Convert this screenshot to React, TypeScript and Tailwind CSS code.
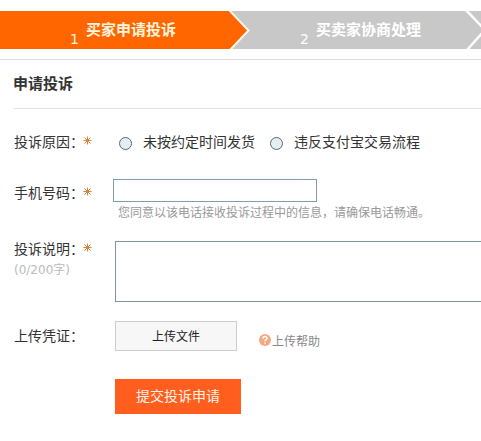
import { useState } from "react";

const reasons = ["未按约定时间发货", "违反支付宝交易流程"];

function Label({ text, required }: { text: string; required?: boolean }) {
  return (
    <div className="flex h-5 items-center text-[14px] leading-5 whitespace-nowrap text-[#333]">
      <span className="w-14">{text}</span>
      <span className="w-3.5">：</span>
      {required && <Star />}
    </div>
  );
}

function Star() {
  return (
    <svg className="-mt-1 -ml-px h-[9px] w-[9px]" viewBox="0 0 9 9" stroke="#dc8238" strokeWidth="1">
      <path d="M4.5 0.5v8M0.5 4.5h8M1.5 1.5l6 6M7.5 1.5l-6 6" />
    </svg>
  );
}

function Steps() {
  return (
    <div className="relative mt-[11px] h-[38px] overflow-hidden bg-[#c8c8c8]">
      {/* Arrow shapes */}
      <svg className="absolute inset-0" width="481" height="38" viewBox="0 0 481 38">
        <path d="M0 0H230L248 19L230 38H0Z" fill="#ff6600" />
        <path d="M229 -1L248.500 19.500L230 39" fill="none" stroke="#fff6e6" strokeWidth="2" />
        <path d="M466 -1L485 19L467 39" fill="none" stroke="#fff" strokeWidth="2.500" />
      </svg>
      <div className="relative flex h-full font-bold text-[15px] leading-[38px] whitespace-nowrap">
        <div className="flex w-[230px] pl-[70px] text-[#fff4dc]">
          <span className="w-4 pt-[9px] font-['DejaVu_Sans'] text-[14px] font-normal">1</span>
          <span>买家申请投诉</span>
        </div>
        <div className="flex pl-[70px] text-white">
          <span className="w-4 pt-[9px] font-['DejaVu_Sans'] text-[14px] font-normal">2</span>
          <span>买卖家协商处理</span>
        </div>
      </div>
    </div>
  );
}

export default function App() {
  const [reason, setReason] = useState("");
  const [phone, setPhone] = useState("");
  const [detail, setDetail] = useState("");

  return (
    <div
      lang="zh-CN"
      className="h-[441px] w-[481px] overflow-hidden bg-white font-['Liberation_Sans','Noto_Sans_CJK_SC',sans-serif]"
    >
      <Steps />

      <div className="mt-2.5 border-t border-[#dedede] pl-3.5">
        <h1 className="h-[49px] border-b border-[#e2e2e2] text-[15px] leading-[48px] font-bold text-[#333]">
          <span className="-ml-px">申请投诉</span>
        </h1>

        {/* Reason */}
        <div className="mt-[23px] flex h-5 items-center">
          <div className="w-[105px] shrink-0">
            <Label text="投诉原因" required />
          </div>
          {reasons.map((r) => (
            <label key={r} className="mr-[15px] flex items-center text-[14px] leading-5 whitespace-nowrap text-[#333]">
              <input
                type="radio"
                name="reason"
                checked={reason === r}
                onChange={() => setReason(r)}
                className="mt-[3px] mr-[11px] h-[13px] w-[13px] appearance-none rounded-full border border-[#526b7a] bg-[#e6eef2] checked:bg-[#526b7a]"
              />
              {r}
            </label>
          ))}
        </div>

        {/* Phone */}
        <div className="mt-[27px] flex h-[62px]">
          <div className="w-[99px] shrink-0 pt-1">
            <Label text="手机号码" required />
          </div>
          <div>
            <input
              value={phone}
              onChange={(e) => setPhone(e.target.value)}
              className="block h-[23px] w-[204px] border border-[#7f9db0] bg-white px-1 text-[14px] outline-none"
            />
            <p className="mt-[3px] pl-[5px] text-[12px] leading-4 whitespace-nowrap text-[#999]">
              您同意以该电话接收投诉过程中的信息，请确保电话畅通。
            </p>
          </div>
        </div>

        {/* Detail */}
        <div className="flex h-20">
          <div className="w-[101px] shrink-0">
            <div className="-mt-0.5">
              <Label text="投诉说明" required />
            </div>
            <p className="mt-[3px] font-['DejaVu_Sans','Noto_Sans_CJK_SC',sans-serif] text-[12px] leading-4 text-[#bbb]">(0/200字)</p>
          </div>
          <textarea
            value={detail}
            onChange={(e) => setDetail(e.target.value)}
            className="block h-[61px] w-[400px] shrink-0 resize-none border border-[#8195a0] bg-white p-1 text-[14px] outline-none"
          />
        </div>

        {/* Evidence */}
        <div className="flex h-[58px]">
          <div className="w-[101px] shrink-0 pt-[5px]">
            <Label text="上传凭证" />
          </div>
          <button className="h-[30px] w-[122px] border border-[#ccc] bg-[#f7f7f7] pt-px text-[12px] text-[#222]">上传文件</button>
          <a className="ml-[22px] flex h-[42px] items-center text-[12px] whitespace-nowrap text-[#888]">
            <svg className="-mt-1 mr-px h-3 w-3" viewBox="0 0 12 12">
              <circle cx="6" cy="6" r="6" fill="#f3aa83" />
              <path d="M4 4.500C4 2 8 2 8 4.300C8 5.800 6 5.600 6 7.200M6 8.400V9.800" fill="none" stroke="#fff" strokeWidth="1.500" />
            </svg>
            上传帮助
          </a>
        </div>

        <button className="ml-[101px] block h-[35px] w-[126px] bg-[#ff5e1e] text-[14px] text-[#fff4e8]">提交投诉申请</button>
      </div>
    </div>
  );
}
